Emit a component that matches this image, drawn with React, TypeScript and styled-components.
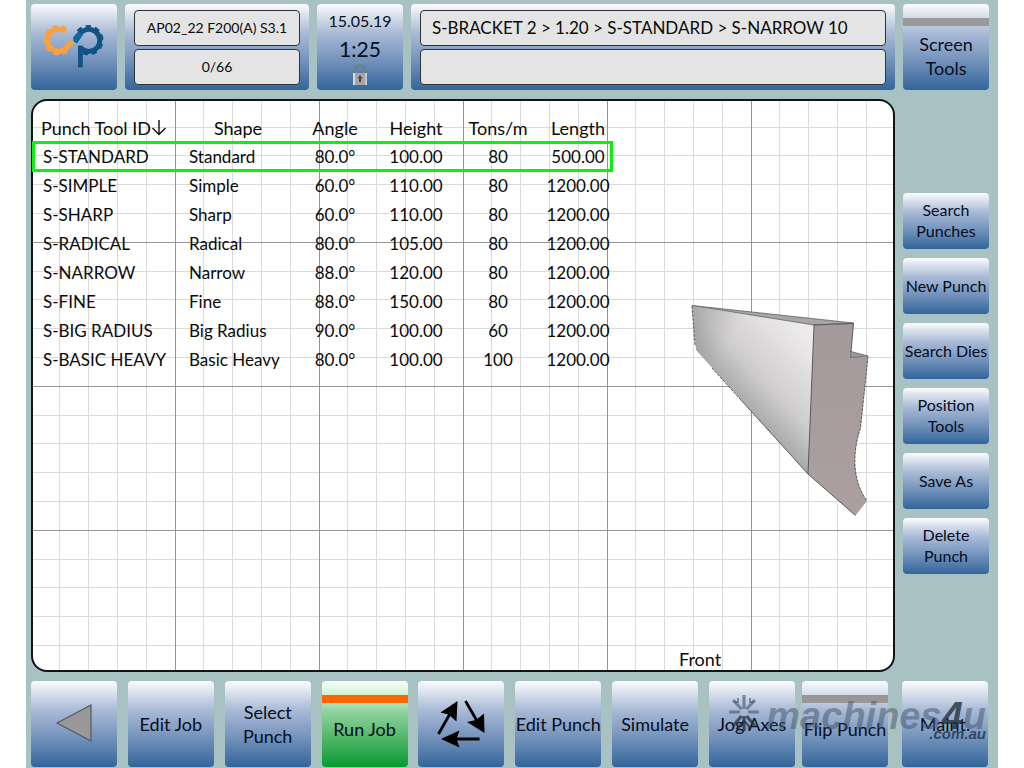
import React from "react";
import styled, { createGlobalStyle, css } from "styled-components";

const GlobalStyle = createGlobalStyle`
  *, *::before, *::after { box-sizing: border-box; }
  body {
    margin: 0;
    background: #fff;
    color: #0a0a0a;
    font-family: Lato, "Open Sans", sans-serif;
    font-size: 17px;
    line-height: 20px;
  }
  button, input { font: inherit; color: inherit; }
`;

type Tone = "blue" | "green";

const tones: Record<Tone, string> = {
  blue: "linear-gradient(#fbfcfe 0%, #d3dcea 16%, #a9bad6 34%, #7695bd 64%, #33659b 100%)",
  green: "linear-gradient(#f8fef8 0%, #c6ebcb 20%, #8fd29b 36%, #55b96c 64%, #079a32 100%)",
};

const Screen = styled.div`
  display: flex;
  flex-direction: column;
  gap: 9px;
  min-height: 100vh;
  margin: 0 26px;
  padding: 4px 9px 1px 5px;
  background: #a8c2c4;
`;

const Header = styled.header`
  display: flex;
  gap: 8px;
`;

const raised = css<{ $tone?: Tone }>`
  border: 0;
  border-radius: 4px;
  background: ${(p) => tones[p.$tone ?? "blue"]};
`;

const Key = styled.button<{ $tone?: Tone; $bar?: string; $inset?: number }>`
  ${raised}
  position: relative;
  display: flex;
  flex: none;
  align-items: center;
  justify-content: center;
  width: 86px;
  height: 86px;
  padding: ${(p) => p.$inset ?? 0}px 0 0;
  color: #060d1c;
  font-size: 18px;
  line-height: 24px;
  text-align: center;
  cursor: pointer;

  ${(p) =>
    p.$bar &&
    css`
      &::before {
        content: "";
        position: absolute;
        top: 14px;
        left: 0;
        right: 0;
        height: 8px;
        background: ${p.$bar};
      }
    `}
`;

const SideKey = styled(Key)`
  height: 56px;
  font-size: 16px;
  line-height: 21px;
  padding-bottom: 2px;
`;

const InfoPanel = styled.div<{ $wide?: boolean }>`
  ${raised}
  display: flex;
  flex: ${(p) => (p.$wide ? "1" : "0 0 184px")};
  flex-direction: column;
  gap: 3px;
  min-width: 0;
  height: 86px;
  padding: 6px 9px 5px;
`;

const Readout = styled.input<{ $left?: boolean }>`
  flex: 1;
  width: 100%;
  min-height: 0;
  padding: 0 ${(p) => (p.$left ? "11px" : "4px")};
  border: 1px solid #2f3338;
  border-radius: 4px;
  outline: 0;
  background: #e4e4e4;
  font-size: ${(p) => (p.$left ? "17px" : "14px")};
  text-align: ${(p) => (p.$left ? "left" : "center")};
`;

const Clock = styled.div`
  ${raised}
  display: flex;
  flex: none;
  flex-direction: column;
  align-items: center;
  justify-content: space-between;
  width: 86px;
  height: 86px;
  padding: 5px 0 4px;
  color: #060d1c;
  font-size: 16px;
  line-height: 24px;
`;

const Time = styled.time`
  font-size: 21px;
  line-height: 24px;
`;

const Main = styled.main`
  display: flex;
  flex: 1;
  gap: 8px;
`;

const Workspace = styled.section`
  display: flex;
  flex: 1;
  min-width: 0;
  min-height: 573px;
  padding-top: 12px;
  border: 2px solid #101414;
  border-radius: 16px;
  background-color: #fff;
  background-image:
    linear-gradient(90deg, transparent 143px, #949494 143px),
    linear-gradient(transparent 143px, #949494 143px),
    linear-gradient(90deg, transparent 27px, #dadada 27px 28px, transparent 28px 56px, #dadada 56px 57px, transparent 57px 85px, #dadada 85px 86px, transparent 86px 114px, #dadada 114px 115px, transparent 115px),
    linear-gradient(transparent 28px, #dadada 28px 29px, transparent 29px 56px, #dadada 56px 57px, transparent 57px 85px, #dadada 85px 86px, transparent 86px 114px, #dadada 114px 115px, transparent 115px);
  background-origin: border-box;
  background-position: 1px 0;
  background-size: 144px 144px;
`;

const Table = styled.table`
  flex: none;
  align-self: flex-start;
  width: 579px;
  border-collapse: collapse;
  table-layout: fixed;
`;

const Row = styled.tr<{ $selected?: boolean }>`
  height: 29px;
  outline: ${(p) => (p.$selected ? "3px solid #0cf20c" : "0")};
  outline-offset: -2px;
`;

const Heading = styled.th<{ $width: number; $left?: boolean }>`
  width: ${(p) => p.$width}px;
  padding: 0 0 0 ${(p) => (p.$left ? "8px" : "0")};
  font-size: 18px;
  font-weight: 400;
  text-align: ${(p) => (p.$left ? "left" : "center")};
  white-space: nowrap;
`;

const SortButton = styled.button`
  display: flex;
  align-items: center;
  padding: 0;
  border: 0;
  background: none;
  cursor: pointer;
`;

const Cell = styled.td<{ $indent?: number }>`
  padding: 0 0 0 ${(p) => p.$indent ?? 0}px;
  text-align: ${(p) => (p.$indent === undefined ? "center" : "left")};
  white-space: nowrap;
`;

const Preview = styled.figure`
  display: flex;
  flex: 1;
  flex-direction: column;
  justify-content: space-between;
  min-width: 0;
  margin: 0;
  padding: 190px 0 1px 67px;
  font-size: 18px;
`;

const PunchDrawing = styled.svg`
  display: block;
  margin-left: 11px;
`;

const Side = styled.nav`
  display: flex;
  flex: none;
  flex-direction: column;
  gap: 9px;
  padding-top: 94px;
`;

const Footer = styled.footer`
  position: relative;
  display: flex;
  padding-right: 1px;
`;

const KeyRow = styled.div`
  display: flex;
  flex: 1;
  justify-content: space-between;
  margin-right: 7px;
`;

const EndKeys = styled.div`
  display: flex;
  flex: none;
  gap: 14px;
`;

const Watermark = styled.div`
  position: absolute;
  top: 14px;
  right: 3px;
  display: flex;
  gap: 7px;
  color: rgba(66, 84, 108, 0.5);
  font-family: "Liberation Sans", sans-serif;
  font-style: italic;
  font-weight: 700;
  pointer-events: none;
`;

const Brand = styled.div`
  font-size: 38px;
  line-height: 42px;
  text-align: right;
`;

const Four = styled.span`
  color: rgba(36, 46, 62, 0.8);
`;

const Domain = styled.div`
  margin-top: -12px;
  color: rgba(30, 48, 76, 0.8);
  font-size: 15px;
  line-height: 18px;
`;

const Logo = () => (
  <svg width="86" height="86" viewBox="31 4 86 86" fill="none" aria-label="cp">
    <g stroke="#f9a13d">
      <path d="M65.500 31.800A11 11 0 1 0 67.500 46.500L72.500 41" strokeWidth="5" />
      <path d="M66 29A13.500 13.500 0 1 0 70 47.500" strokeWidth="3.500" strokeDasharray="5 4" />
    </g>
    <g stroke="#0f5484">
      <path d="M79.500 34.500A11 11 0 1 1 81.500 48.600" strokeWidth="5" />
      <path d="M78 31.500A13.500 13.500 0 1 1 82 52.300" strokeWidth="3.500" strokeDasharray="5 4" />
      <path d="M80.400 67.500V45.500" strokeWidth="4.800" />
    </g>
    <path d="M74.500 35.500L78.500 31.500L83 35L77 43.500L73.500 41.500L73 38Z" fill="#16669c" />
  </svg>
);

const LockIcon = () => (
  <svg width="16" height="22" viewBox="0 0 16 22" aria-label="Locked">
    <path d="M3 10V6.500a5 5 0 0 1 10 0V10" fill="none" stroke="#6f8078" strokeWidth="2" />
    <rect x="1" y="9" width="14" height="12" fill="#a5a5a5" />
    <path d="M1 9h2v12H1z" fill="#d8d8d8" />
    <path d="M13 9h2v12h-2z" fill="#c9c9c9" />
    <path d="M8 11l2.500 3.500H9V18H7v-3.500H5.500z" fill="#4c4438" />
  </svg>
);

const BackIcon = () => (
  <svg width="40" height="42" viewBox="0 0 40 42" aria-label="Back">
    <path d="M3 20L37 2V38Z" fill="#999" stroke="#56595e" strokeWidth="1.200" />
  </svg>
);

const CycleIcon = () => (
  <svg width="86" height="86" viewBox="0 0 86 86" aria-label="Cycle">
    <g stroke="#000" strokeWidth="2.800">
      <path d="M20.500 53L33 31M47.500 20L59 40M61.500 58H38" />
    </g>
    <path d="M39.500 20L22.500 31.500L30.500 33.500L38.500 40.500Z" />
    <path d="M66.500 52L49 41L58 39L66 32.500Z" />
    <path d="M23 58L41.500 49.500L38.500 58L41.500 66.500Z" />
  </svg>
);

const SortArrow = () => (
  <svg width="16" height="18" viewBox="0 0 16 18" fill="none" stroke="#111" strokeWidth="1.400">
    <path d="M8 1V15.500M1.500 9L8 15.500L14.500 9" />
  </svg>
);

const PunchView = () => (
  <PunchDrawing width="182" height="216" viewBox="690 303 182 216" aria-label="Punch profile">
    <defs>
      <linearGradient id="face" gradientUnits="userSpaceOnUse" x1="727" y1="412" x2="806" y2="338">
        <stop offset="0" stopColor="#e6e6e6" />
        <stop offset="0.150" stopColor="#a9a9a9" />
        <stop offset="0.450" stopColor="#cfcdcd" />
        <stop offset="1" stopColor="#eceaea" />
      </linearGradient>
      <linearGradient id="shade" gradientUnits="userSpaceOnUse" x1="692" y1="306" x2="735" y2="330">
        <stop offset="0" stopColor="#777" stopOpacity="0.450" />
        <stop offset="1" stopColor="#888" stopOpacity="0" />
      </linearGradient>
      <linearGradient id="end" x1="0" y1="0" x2="0" y2="1">
        <stop offset="0" stopColor="#a59a9b" />
        <stop offset="1" stopColor="#ab9fa0" />
      </linearGradient>
    </defs>
    <path d="M692 306L814 325L808 474L696 350Z" fill="url(#face)" />
    <path d="M692 306L814 325L808 474L696 350Z" fill="url(#shade)" />
    <path d="M692 305.500L853.500 323L814 325Z" fill="#a6a6a6" stroke="#555" strokeWidth="0.700" />
    <path
      d="M814 325L853.500 323.500L850.500 357L868 356.500L860.500 428C853 450 851 479 867 501L855.500 515.500L808 474Z"
      fill="url(#end)"
    />
    <path d="M851 351.500L868 356L850.500 357.500Z" fill="#9b9b9b" stroke="#555" strokeWidth="0.700" />
    <g fill="none" stroke="#4f4c4c" strokeWidth="0.900">
      <path d="M814 325L808 474L855.500 515.500M814 325L853.500 323.500L851 352M740 399L808 474" />
      <path d="M692 306L695 345M712 368L740 399M868 356.500L860.500 428C853 450 851 479 867 501" strokeDasharray="3 1" />
    </g>
  </PunchDrawing>
);

const Snowflake = () => (
  <svg width="30" height="38" viewBox="0 0 30 38" fill="none">
    <g stroke="rgba(66,84,108,0.600)" strokeWidth="3.200">
      <path d="M15 0V14M4 5L12.500 14M26 5L17.500 14M0 17H11M19 17H30" />
      <path d="M9 3V7H5M21 3V7H25" strokeWidth="2" />
    </g>
    <g stroke="rgba(30,44,66,0.720)" strokeWidth="3.200">
      <path d="M15 21V36M4 31L12.500 21M26 31L17.500 21" />
      <path d="M10 35V31L15 26L20 31V35" strokeWidth="2.200" />
    </g>
  </svg>
);

const columns = [
  { label: "Shape", width: 104 },
  { label: "Angle", width: 90 },
  { label: "Height", width: 72 },
  { label: "Tons/m", width: 92 },
  { label: "Length", width: 68 },
];

const punches = [
  ["S-STANDARD", "Standard", "80.0°", "100.00", "80", "500.00"],
  ["S-SIMPLE", "Simple", "60.0°", "110.00", "80", "1200.00"],
  ["S-SHARP", "Sharp", "60.0°", "110.00", "80", "1200.00"],
  ["S-RADICAL", "Radical", "80.0°", "105.00", "80", "1200.00"],
  ["S-NARROW", "Narrow", "88.0°", "120.00", "80", "1200.00"],
  ["S-FINE", "Fine", "88.0°", "150.00", "80", "1200.00"],
  ["S-BIG RADIUS", "Big Radius", "90.0°", "100.00", "60", "1200.00"],
  ["S-BASIC HEAVY", "Basic Heavy", "80.0°", "100.00", "100", "1200.00"],
];

const sideActions = ["Search Punches", "New Punch", "Search Dies", "Position Tools", "Save As", "Delete Punch"];

export default function App() {
  return (
    <>
      <GlobalStyle />
      <Screen>
        <Header>
          <Key aria-label="Home">
            <Logo />
          </Key>
          <InfoPanel>
            <Readout readOnly aria-label="Program" defaultValue="AP02_22 F200(A) S3.1" />
            <Readout readOnly aria-label="Part count" defaultValue="0/66" />
          </InfoPanel>
          <Clock>
            <span>15.05.19</span>
            <Time>1:25</Time>
            <LockIcon />
          </Clock>
          <InfoPanel $wide>
            <Readout
              $left
              readOnly
              aria-label="Current job"
              defaultValue="S-BRACKET 2 > 1.20 > S-STANDARD > S-NARROW 10"
            />
            <Readout $left readOnly aria-label="Message" defaultValue="" />
          </InfoPanel>
          <Key $bar="#999" $inset={18}>
            Screen Tools
          </Key>
        </Header>

        <Main>
          <Workspace>
            <Table>
              <thead>
                <Row>
                  <Heading $width={153} $left>
                    <SortButton>
                      Punch Tool ID
                      <SortArrow />
                    </SortButton>
                  </Heading>
                  {columns.map((c) => (
                    <Heading key={c.label} $width={c.width}>
                      {c.label}
                    </Heading>
                  ))}
                </Row>
              </thead>
              <tbody>
                {punches.map(([id, shape, ...values], i) => (
                  <Row key={id} $selected={i === 0}>
                    <Cell $indent={10}>{id}</Cell>
                    <Cell $indent={3}>{shape}</Cell>
                    {values.map((v, n) => (
                      <Cell key={n}>{v}</Cell>
                    ))}
                  </Row>
                ))}
              </tbody>
            </Table>
            <Preview>
              <PunchView />
              <figcaption>Front</figcaption>
            </Preview>
          </Workspace>
          <Side>
            {sideActions.map((label) => (
              <SideKey key={label}>{label}</SideKey>
            ))}
          </Side>
        </Main>

        <Footer>
          <KeyRow>
            <Key aria-label="Back">
              <BackIcon />
            </Key>
            <Key>Edit Job</Key>
            <Key>Select Punch</Key>
            <Key $tone="green" $bar="#ff6600" $inset={10}>
              Run Job
            </Key>
            <Key aria-label="Cycle">
              <CycleIcon />
            </Key>
            <Key>Edit Punch</Key>
            <Key>Simulate</Key>
            <Key>Jog Axes</Key>
          </KeyRow>
          <EndKeys>
            <Key $bar="#999694" $inset={10}>
              Flip Punch
            </Key>
            <Key>Maint.</Key>
          </EndKeys>
          <Watermark>
            <Snowflake />
            <Brand>
              machines<Four>4</Four>u
              <Domain>.com.au</Domain>
            </Brand>
          </Watermark>
        </Footer>
      </Screen>
    </>
  );
}
